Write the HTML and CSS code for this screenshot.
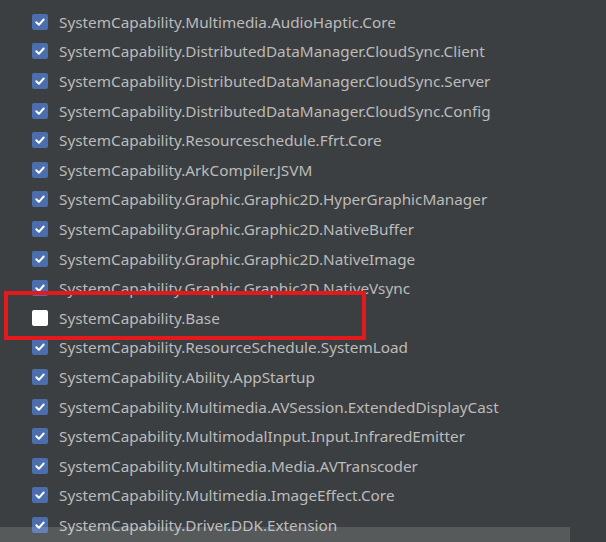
FILE: index.html
```html
<!DOCTYPE html>
<html>
<head>
    <meta charset="utf-8">
    <title>SystemCapability</title>
    <link rel="stylesheet" href="styles.css">
</head>
<body>
<div class="panel">
    <ul class="cap-list">
        <li><span class="box on"></span>SystemCapability.Multimedia.AudioHaptic.Core</li>
        <li><span class="box on"></span>SystemCapability.DistributedDataManager.CloudSync.Client</li>
        <li><span class="box on"></span>SystemCapability.DistributedDataManager.CloudSync.Server</li>
        <li><span class="box on"></span>SystemCapability.DistributedDataManager.CloudSync.Config</li>
        <li><span class="box on"></span>SystemCapability.Resourceschedule.Ffrt.Core</li>
        <li><span class="box on"></span>SystemCapability.ArkCompiler.JSVM</li>
        <li><span class="box on"></span>SystemCapability.Graphic.Graphic2D.HyperGraphicManager</li>
        <li><span class="box on"></span>SystemCapability.Graphic.Graphic2D.NativeBuffer</li>
        <li><span class="box on"></span>SystemCapability.Graphic.Graphic2D.NativeImage</li>
        <li><span class="box on"></span>SystemCapability.Graphic.Graphic2D.NativeVsync</li>
        <li><span class="box"></span>SystemCapability.Base</li>
        <li><span class="box on"></span>SystemCapability.ResourceSchedule.SystemLoad</li>
        <li><span class="box on"></span>SystemCapability.Ability.AppStartup</li>
        <li><span class="box on"></span>SystemCapability.Multimedia.AVSession.ExtendedDisplayCast</li>
        <li><span class="box on"></span>SystemCapability.MultimodalInput.Input.InfraredEmitter</li>
        <li><span class="box on"></span>SystemCapability.Multimedia.Media.AVTranscoder</li>
        <li><span class="box on"></span>SystemCapability.Multimedia.ImageEffect.Core</li>
        <li><span class="box on"></span>SystemCapability.Driver.DDK.Extension</li>
    </ul>
    <div class="mark"></div>
    <div class="hscroll"></div>
</div>
</body>
</html>
```

FILE: styles.css
```css
html,body{
    margin: 0;
    padding: 0;
    background: #3c3f41;
}
.panel{
    position: relative;
    width: 606px;
    height: 542px;
    overflow: hidden;
}
.cap-list{
    list-style: none;
    margin: 0;
    padding: 7px 0 0 32px;
}
.cap-list li{
    display: flex;
    align-items: center;
    height: 29.6px;
    font-family: "Noto Sans", "Open Sans", sans-serif;
    font-size: 15.3px;
    color: #bbbbbb;
    white-space: nowrap;
}
.box{
    flex: none;
    width: 16px;
    height: 16px;
    margin-right: 11px;
    border-radius: 2px;
    background: #ffffff;
}
.box.on{
    background: #4b6eaf url("data:image/svg+xml,%3Csvg xmlns='http://www.w3.org/2000/svg' width='16' height='16'%3E%3Cpath d='M4.3 8.3l2.6 2.5 4.8-5.3' fill='none' stroke='%23fff' stroke-width='2' stroke-linecap='round' stroke-linejoin='round'/%3E%3C/svg%3E") no-repeat center;
}
/* annotation box */
.mark{
    position: absolute;
    left: 4px;
    top: 291px;
    width: 354px;
    height: 41px;
    border: 4px solid #e5191c;
}
.hscroll{
    position: absolute;
    left: 0;
    bottom: 0;
    width: 570px;
    height: 15px;
    background: rgba(255,255,255,0.14);
}
```
